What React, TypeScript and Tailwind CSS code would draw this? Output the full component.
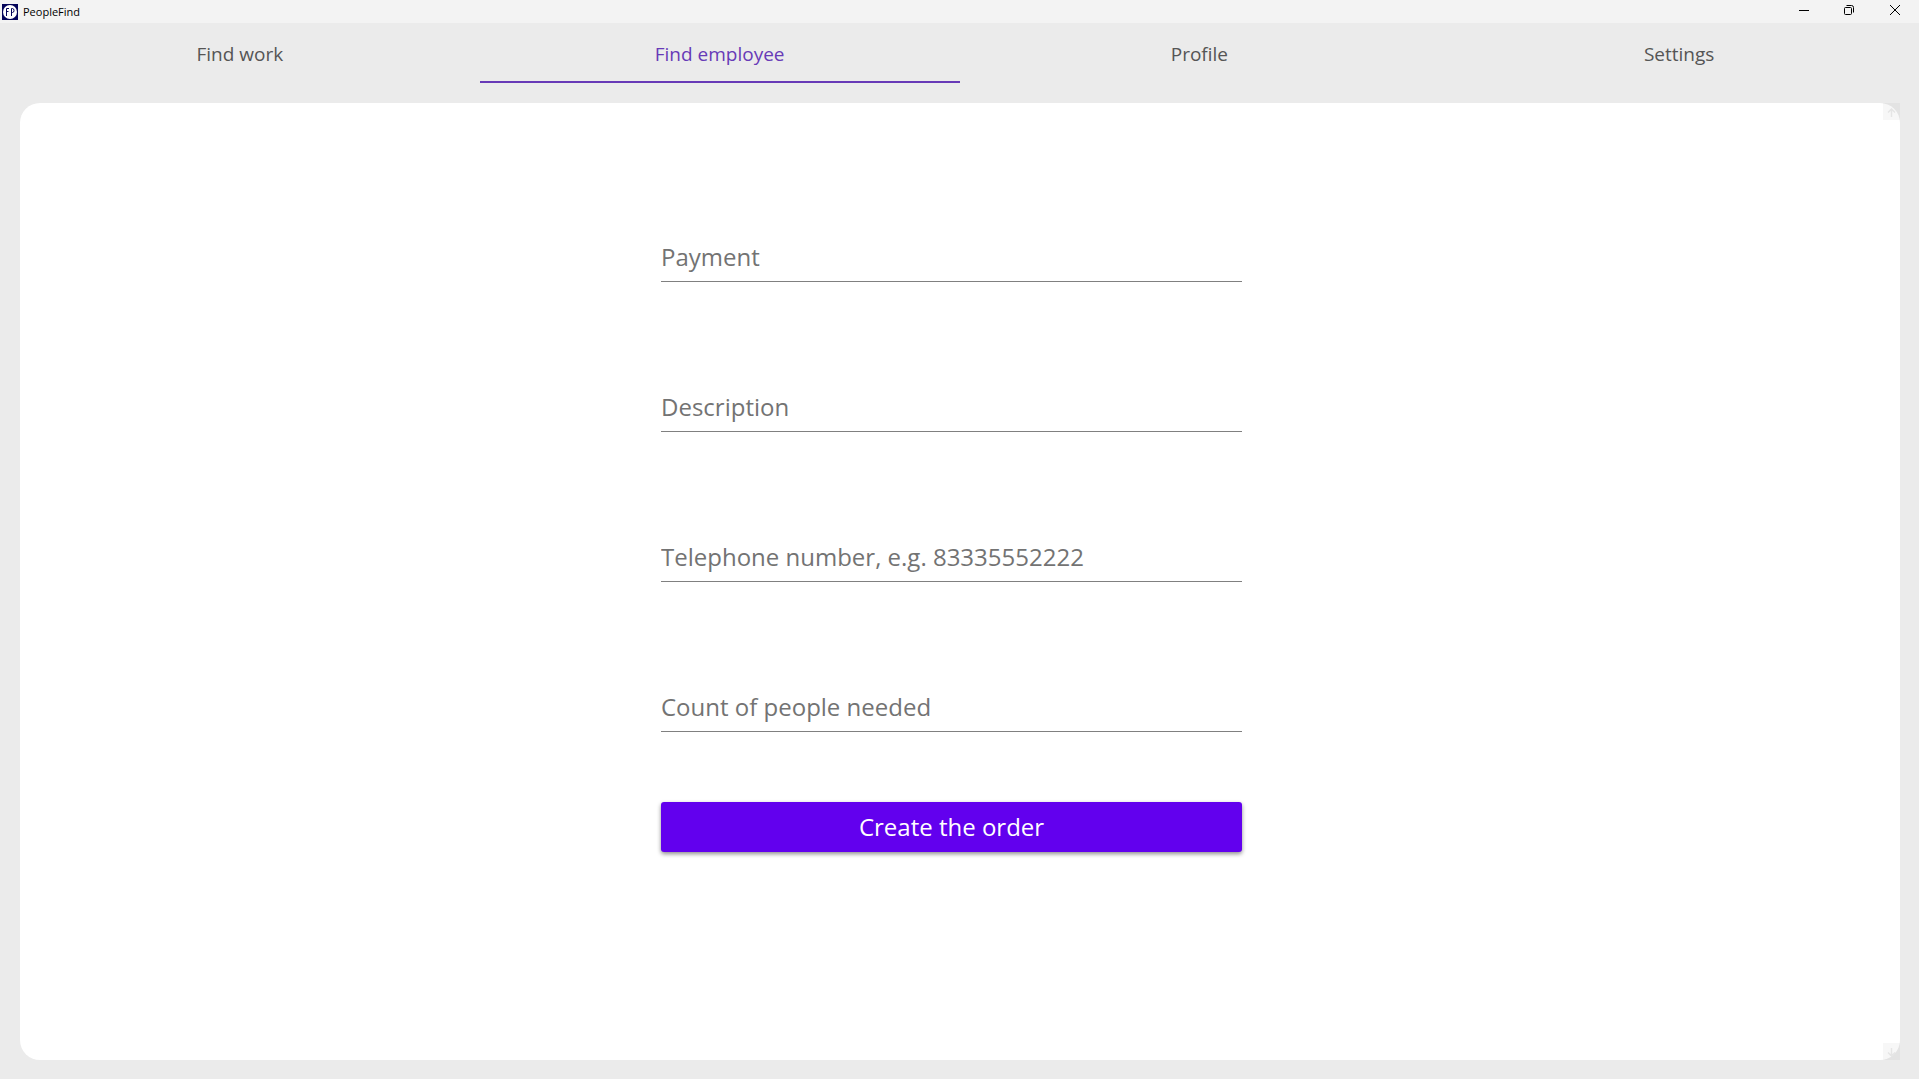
const tabs = ["Find work", "Find employee", "Profile", "Settings"];

const fields = [
  { id: "payment", label: "Payment", type: "text" },
  { id: "description", label: "Description", type: "text" },
  { id: "phone", label: "Telephone number, e.g. 83335552222", type: "tel" },
  { id: "count", label: "Count of people needed", type: "text" },
];

function Logo() {
  return (
    <svg width="16" height="16" viewBox="0 0 16 16" aria-hidden="true">
      <rect width="16" height="16" fill="#04045a" />
      <circle cx="8" cy="8" r="7" fill="#fff" />
      <path d="M7 4.5H4.5V12M4.5 7.5H6.5" fill="none" stroke="#04045a" strokeWidth="1" />
      <path d="M9.5 12V4.5H10.5A1.5 2 0 0 1 10.5 8.5H9.5" fill="none" stroke="#04045a" strokeWidth="1" />
    </svg>
  );
}

function TitleBar() {
  return (
    <header className="flex h-[23px] items-center justify-between bg-[#f3f3f3]">
      <div className="flex items-center gap-[5px] pl-0.5">
        <Logo />
        <span className="text-[11px] leading-4 text-black">PeopleFind</span>
      </div>
      <div className="flex h-full pr-px pb-[3px]">
        <button type="button" aria-label="Minimize" className="flex w-[45px] items-center justify-center">
          <svg width="10" height="10" viewBox="0 0 10 10" fill="none" stroke="#000">
            <path d="M0 5.5H10" />
          </svg>
        </button>
        <button type="button" aria-label="Restore" className="flex w-[46px] items-center justify-center">
          <svg width="10" height="10" viewBox="0 0 10 10" fill="none" stroke="#000">
            <rect x="0.5" y="2.5" width="7" height="7" rx="1" />
            <path d="M2.5 .5H7.5A2 2 0 0 1 9.5 2.5V7.5" />
          </svg>
        </button>
        <button type="button" aria-label="Close" className="flex w-[46px] items-center justify-center">
          <svg width="10" height="10" viewBox="0 0 10 10" fill="none" stroke="#000">
            <path d="M0 0L10 10M10 0L0 10" />
          </svg>
        </button>
      </div>
    </header>
  );
}

function ScrollButton({ label, path }: { label: string; path: string }) {
  return (
    <button type="button" aria-label={label} className="flex size-[17px] items-center justify-center bg-black/3 pt-px">
      <svg width="9" height="9" viewBox="0 0 9 9" fill="none" stroke="#e5e5e5" strokeWidth="1.5">
        <path d={path} />
      </svg>
    </button>
  );
}

export default function App() {
  return (
    <div className="flex min-h-screen flex-col bg-[#ebebeb] font-['Open_Sans','Noto_Sans',sans-serif]">
      <TitleBar />
      <nav className="grid h-15 grid-cols-4" role="tablist">
        {tabs.map((tab) => (
          <button
            key={tab}
            type="button"
            role="tab"
            aria-selected={tab === "Find employee"}
            className="border-b-2 border-transparent pt-1 text-[19px] leading-7 text-[#555] aria-selected:border-[#673ab7] aria-selected:text-[#673ab7]"
          >
            {tab}
          </button>
        ))}
      </nav>
      <main className="relative mt-5 mr-[19px] mb-[19px] ml-5 flex grow flex-col rounded-[20px] bg-white pr-[17px]">
        <form className="mx-auto flex w-[581px] max-w-full flex-col pt-[129px]">
          <div className="flex flex-col gap-[100px]">
            {fields.map((field) => (
              <input
                key={field.id}
                id={field.id}
                type={field.type}
                aria-label={field.label}
                placeholder={field.label}
                className="h-[50px] w-full border-b border-[#808080] bg-transparent text-2xl text-[#333] outline-none placeholder:text-[#737373]"
              />
            ))}
          </div>
          <button
            type="button"
            className="mt-[70px] h-[50px] rounded-[3px] bg-[#6200ee] text-2xl text-white shadow-[0_2px_4px_rgba(0,0,0,0.45)]"
          >
            Create the order
          </button>
        </form>
        <div className="absolute inset-y-0 right-0 flex flex-col justify-between">
          <ScrollButton label="Scroll up" path="M4.5 9V1M1 4.5L4.5 1L8 4.5" />
          <ScrollButton label="Scroll down" path="M4.5 0V8M1 4.5L4.5 8L8 4.5" />
        </div>
      </main>
    </div>
  );
}
